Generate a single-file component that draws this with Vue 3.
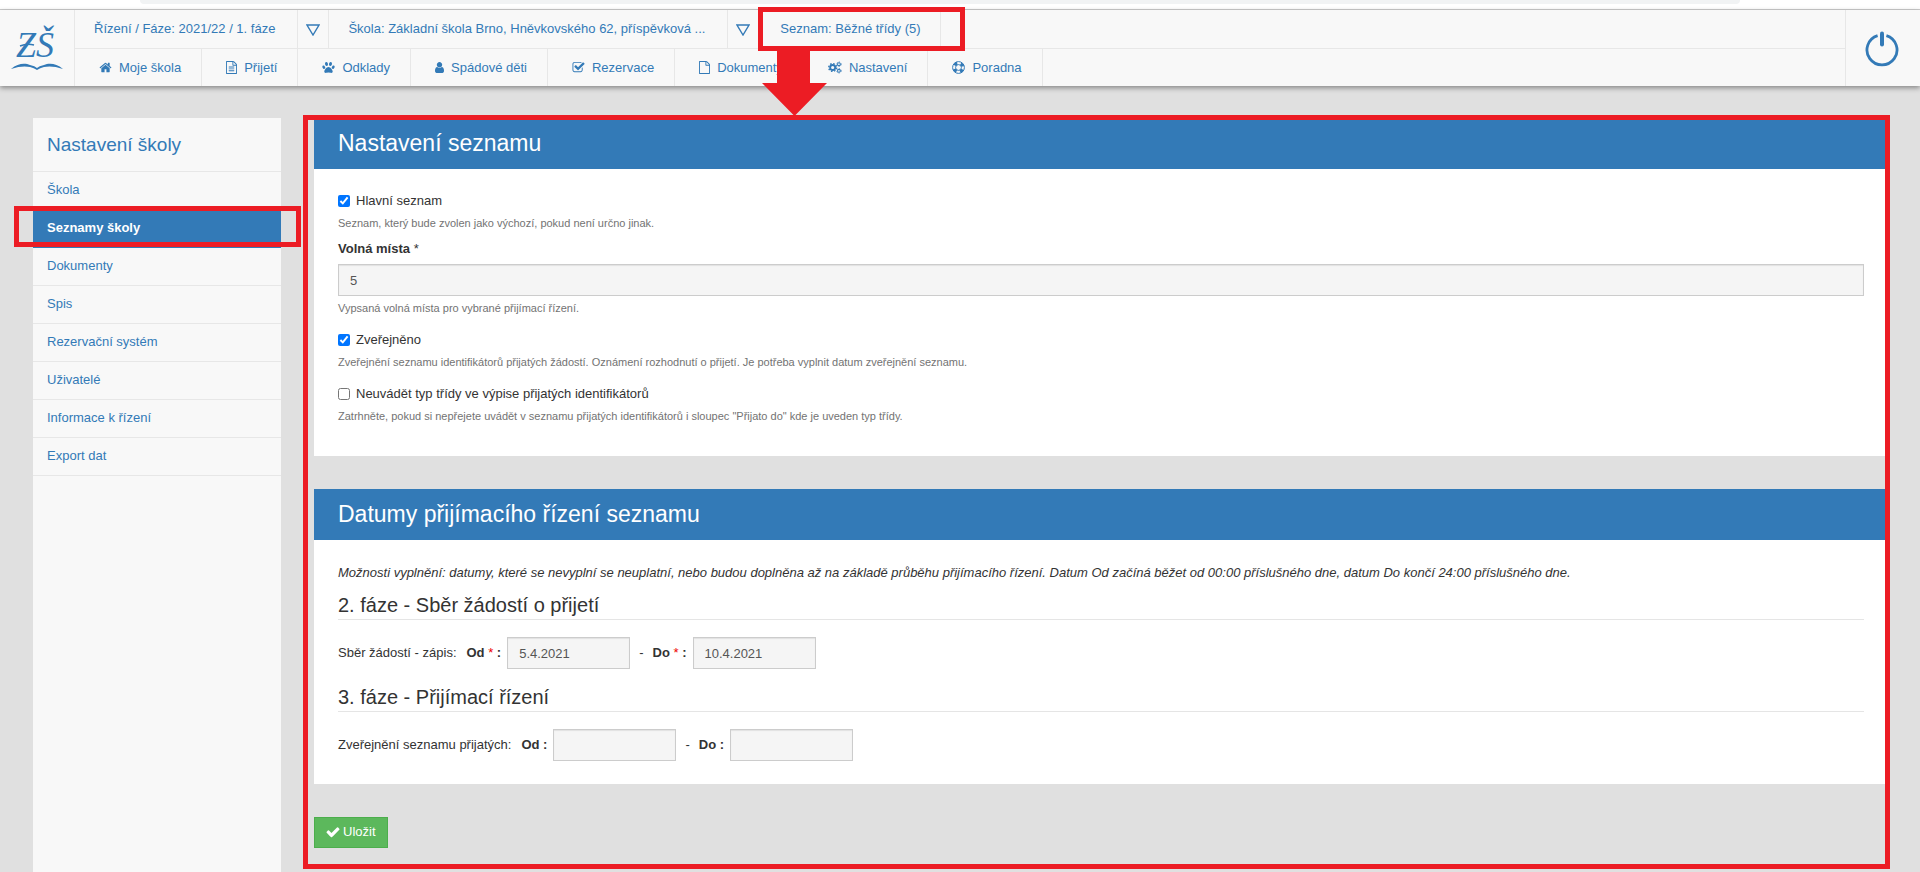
<script setup>
import { ref } from 'vue'

const icons = {
  home: { box: '0 0 1792 1792', w: 13, d: 'M1472 992v480q0 26-19 45t-45 19h-384v-384h-256v384h-384q-26 0-45-19t-19-45v-480q0-1 .5-3t.5-3l575-474 575 474q1 2 1 6zm223-69l-62 74q-8 9-21 11h-3q-13 0-21-7l-692-577-692 577q-12 8-24 7-13-2-21-11l-62-74q-8-10-7-23.5t11-21.5l719-599q32-26 76-26t76 26l244 204v-195q0-14 9-23t23-9h192q14 0 23 9t9 23v408l219 182q10 8 11 21.5t-7 23.5z' },
  text: { box: '128 0 1536 1792', w: 11, d: 'M1596 380q28 28 48 76t20 88v1152q0 40-28 68t-68 28h-1344q-40 0-68-28t-28-68v-1600q0-40 28-68t68-28h896q40 0 88 20t76 48zm-444-244v376h376q-10-29-22-41l-313-313q-12-12-41-22zm384 1528v-1024h-416q-40 0-68-28t-28-68v-416h-768v1536h1280zm-1024-864q0-14 9-23t23-9h704q14 0 23 9t9 23v64q0 14-9 23t-23 9h-704q-14 0-23-9t-9-23v-64zm736 224q14 0 23 9t9 23v64q0 14-9 23t-23 9h-704q-14 0-23-9t-9-23v-64q0-14 9-23t23-9h704zm0 256q14 0 23 9t9 23v64q0 14-9 23t-23 9h-704q-14 0-23-9t-9-23v-64q0-14 9-23t23-9h704z' },
  user: { box: '256 0 1280 1792', w: 9, d: 'M1536 1399q0 109-62.5 187t-150.5 78h-854q-88 0-150.5-78t-62.5-187q0-85 8.5-160.5t31.5-152 58.5-131 94-89 134.5-34.5q131 128 313 128t313-128q76 0 134.5 34.5t94 89 58.5 131 31.5 152 8.5 160.5zm-256-887q0 159-112.5 271.5t-271.5 112.5-271.5-112.5-112.5-271.5 112.5-271.5 271.5-112.5 271.5 112.5 112.5 271.5z' },
  check: { box: '0 0 1792 1792', w: 13, d: 'M1472 930v318q0 119-84.5 203.5t-203.5 84.5h-832q-119 0-203.5-84.5t-84.5-203.5v-832q0-119 84.5-203.5t203.5-84.5h832q63 0 117 25 15 7 18 23 3 17-9 29l-49 49q-10 10-23 10-3 0-9-2-23-6-45-6h-832q-66 0-113 47t-47 113v832q0 66 47 113t113 47h832q66 0 113-47t47-113v-254q0-13 9-22l64-64q10-10 23-10 6 0 12 3 20 8 20 29zm231-489l-814 814q-24 24-57 24t-57-24l-430-430q-24-24-24-57t24-57l110-110q24-24 57-24t57 24l263 263 647-647q24-24 57-24t57 24l110 110q24 24 24 57t-24 57z' },
  file: { box: '128 0 1536 1792', w: 11, d: 'M1596 380q28 28 48 76t20 88v1152q0 40-28 68t-68 28h-1344q-40 0-68-28t-28-68v-1600q0-40 28-68t68-28h896q40 0 88 20t76 48zm-444-244v376h376q-10-29-22-41l-313-313q-12-12-41-22zm384 1528v-1024h-416q-40 0-68-28t-28-68v-416h-768v1536h1280z' },
}

const menu = [
  { label: 'Moje škola', icon: 'home' },
  { label: 'Přijetí', icon: 'text' },
  { label: 'Odklady', icon: 'paw' },
  { label: 'Spádové děti', icon: 'user' },
  { label: 'Rezervace', icon: 'check' },
  { label: 'Dokumenty', icon: 'file' },
  { label: 'Nastavení', icon: 'cogs' },
  { label: 'Poradna', icon: 'ring' },
]

const side = ['Škola', 'Seznamy školy', 'Dokumenty', 'Spis', 'Rezervační systém', 'Uživatelé', 'Informace k řízení', 'Export dat']

const hlavni = ref(true)
const zverejneno = ref(true)
const neuvadet = ref(false)
const mista = ref('5')
const sberOd = ref('5.4.2021')
const sberDo = ref('10.4.2021')
const zverOd = ref('')
const zverDo = ref('')
</script>

<template>
  <div class="page">
    <div class="strip"><div class="pill"></div></div>

    <header class="header">
      <a class="logo" href="#" aria-label="ZŠ">
        <svg width="54" height="46" viewBox="0 0 54 46">
          <text x="6" y="32" class="logo-text">ZŠ</text>
          <path d="M10 21q7-3 14-1" class="ink" stroke-width="1.500" />
          <path d="M1 44C8 38 15 38 20 40q5 1 7 3q2-2 7-3C39 38 46 38 53 44C45 41 38 41 34 42q-4 1-7 3q-3-2-7-3C16 41 9 41 1 44Z" class="fill" />
        </svg>
      </a>
      <div class="bars">
        <div class="bar bar-top">
          <a class="cell" href="#">Řízení / Fáze: 2021/22 / 1. fáze</a>
          <button class="cell drop" type="button" aria-label="Vybrat fázi">
            <svg width="14" height="12" viewBox="0 0 14 12"><path d="M1 1h12L7 11z" class="ink" stroke-width="1.400" /></svg>
          </button>
          <a class="cell" href="#">Škola: Základní škola Brno, Hněvkovského 62, příspěvková ...</a>
          <button class="cell drop" type="button" aria-label="Vybrat školu">
            <svg width="14" height="12" viewBox="0 0 14 12"><path d="M1 1h12L7 11z" class="ink" stroke-width="1.400" /></svg>
          </button>
          <div class="marked">
            <a class="cell" href="#">Seznam: Běžné třídy (5)</a>
            <div class="frame frame-list"></div>
            <svg class="arrow" width="65" height="65" viewBox="0 0 65 65"><path d="M15 0h33v32h17L32.500 65 0 32h15z" /></svg>
          </div>
        </div>
        <nav class="bar">
          <a v-for="m in menu" :key="m.label" class="cell item" href="#">
            <svg v-if="icons[m.icon]" :width="icons[m.icon].w" height="13" :viewBox="icons[m.icon].box"><path :d="icons[m.icon].d" class="fill" /></svg>
            <svg v-else-if="m.icon === 'paw'" width="13" height="13" viewBox="0 0 13 13" class="fill">
              <ellipse cx="4.500" cy="3" rx="1.500" ry="2.100" transform="rotate(-12 4.500 3)" />
              <ellipse cx="8.500" cy="3" rx="1.500" ry="2.100" transform="rotate(12 8.500 3)" />
              <ellipse cx="1.800" cy="6.200" rx="1.300" ry="1.800" transform="rotate(-25 1.800 6.200)" />
              <ellipse cx="11.200" cy="6.200" rx="1.300" ry="1.800" transform="rotate(25 11.200 6.200)" />
              <path d="M6.500 6C8.500 6 10.700 8.900 10.700 10.600C10.700 12 9.500 12 8.600 11.800Q6.500 11 4.400 11.800C3.500 12 2.300 12 2.300 10.600C2.300 8.900 4.500 6 6.500 6Z" />
            </svg>
            <svg v-else-if="m.icon === 'cogs'" width="14" height="13" viewBox="0 0 15 13">
              <circle cx="5" cy="6.500" r="2.700" class="ink" stroke-width="2" />
              <circle cx="5" cy="6.500" r="4.200" class="ink" stroke-width="1.500" stroke-dasharray="1.650 1.650" />
              <circle cx="11.700" cy="3" r="1.500" class="ink" stroke-width="1.100" />
              <circle cx="11.700" cy="3" r="2.400" class="ink" stroke-width=".9" stroke-dasharray="1.250 1.260" />
              <circle cx="11.700" cy="10" r="1.500" class="ink" stroke-width="1.100" />
              <circle cx="11.700" cy="10" r="2.400" class="ink" stroke-width=".9" stroke-dasharray="1.250 1.260" />
            </svg>
            <svg v-else width="13" height="13" viewBox="0 0 13 13">
              <circle cx="6.500" cy="6.500" r="5.900" class="ink" stroke-width="1" />
              <circle cx="6.500" cy="6.500" r="2.900" class="ink" stroke-width="1" />
              <circle cx="6.500" cy="6.500" r="4.400" class="ink" stroke-width="3" stroke-dasharray="3.200 3.710" stroke-dashoffset="-1.850" />
            </svg>
            <span>{{ m.label }}</span>
          </a>
        </nav>
      </div>
      <button class="power" type="button" aria-label="Odhlásit">
        <svg width="34" height="37" viewBox="0 0 34 37">
          <path d="M12.600 5.600A15 15 0 1 0 21.400 5.600" class="ink" stroke-width="2.800" />
          <path d="M17 3.500v11" class="ink" stroke-width="4" stroke-linecap="round" />
        </svg>
      </button>
    </header>

    <div class="content">
      <aside class="side">
        <h2>Nastavení školy</h2>
        <nav>
          <a v-for="s in side" :key="s" href="#" :class="{ active: s === 'Seznamy školy' }">
            {{ s }}<span v-if="s === 'Seznamy školy'" class="frame frame-side"></span>
          </a>
        </nav>
      </aside>

      <main class="main">
        <section class="panel">
          <h1>Nastavení seznamu</h1>
          <div class="body body-list">
            <label class="tick"><input v-model="hlavni" type="checkbox" />Hlavní seznam</label>
            <p class="help">Seznam, který bude zvolen jako výchozí, pokud není určno jinak.</p>
            <label class="name" for="mista"><b>Volná místa</b> *</label>
            <input id="mista" v-model="mista" class="field" type="text" />
            <p class="help">Vypsaná volná místa pro vybrané přijímací řízení.</p>
            <label class="tick next"><input v-model="zverejneno" type="checkbox" />Zveřejněno</label>
            <p class="help">Zveřejnění seznamu identifikátorů přijatých žádostí. Oznámení rozhodnutí o přijetí. Je potřeba vyplnit datum zveřejnění seznamu.</p>
            <label class="tick next"><input v-model="neuvadet" type="checkbox" />Neuvádět typ třídy ve výpise přijatých identifikátorů</label>
            <p class="help">Zatrhněte, pokud si nepřejete uvádět v seznamu přijatých identifikátorů i sloupec "Přijato do" kde je uveden typ třídy.</p>
          </div>
        </section>

        <section class="panel">
          <h1>Datumy přijímacího řízení seznamu</h1>
          <div class="body body-dates">
            <p class="intro">Možnosti vyplnění: datumy, které se nevyplní se neuplatní, nebo budou doplněna až na základě průběhu přijímacího řízení. Datum Od začíná běžet od 00:00 příslušného dne, datum Do končí 24:00 příslušného dne.</p>
            <h3>2. fáze - Sběr žádostí o přijetí</h3>
            <div class="dates">
              <span class="what">Sběr žádostí - zápis:</span>
              <label for="sber-od">Od <i>*</i> :</label>
              <input id="sber-od" v-model="sberOd" class="field date" type="text" />
              <span class="dash">-</span>
              <label for="sber-do">Do <i>*</i> :</label>
              <input id="sber-do" v-model="sberDo" class="field date" type="text" />
            </div>
            <h3 class="later">3. fáze - Přijímací řízení</h3>
            <div class="dates">
              <span class="what">Zveřejnění seznamu přijatých:</span>
              <label for="zver-od">Od :</label>
              <input id="zver-od" v-model="zverOd" class="field date" type="text" />
              <span class="dash">-</span>
              <label for="zver-do">Do :</label>
              <input id="zver-do" v-model="zverDo" class="field date" type="text" />
            </div>
          </div>
        </section>

        <button class="save" type="button">
          <svg width="14" height="14" viewBox="64 64 1664 1664"><path d="M1671 566q0 40-28 68l-724 724-136 136q-28 28-68 28t-68-28l-136-136-362-362q-28-28-28-68t28-68l136-136q28-28 68-28t68 28l294 295 656-657q28-28 68-28t68 28l136 136q28 28 28 68z" fill="#fff" /></svg>
          Uložit
        </button>
        <div class="frame frame-main"></div>
      </main>
    </div>
  </div>
</template>

<style>
body {
  margin: 0;
  background: #e0e0e0;
}
</style>

<style scoped>
.page {
  box-sizing: border-box;
  display: flex;
  flex-direction: column;
  min-height: 100vh;
  overflow: hidden;
  font: 13px/20px "Liberation Sans", Arial, sans-serif;
  color: #333;
}
.page * { box-sizing: border-box; }
a { color: #337ab7; text-decoration: none; }
button { font: inherit; cursor: pointer; }
h1, h2, h3, p { margin: 0; font-weight: 400; }
.ink { fill: none; stroke: #337ab7; }
.fill { fill: #337ab7; }

.strip { height: 10px; background: #fff; border-bottom: 1px solid #ccc; }
.pill { height: 4px; margin: 0 180px 0 140px; background: #f1f3f4; border-radius: 0 0 16px 16px; }

.header {
  position: relative;
  z-index: 2;
  display: flex;
  background: #f8f8f8;
  box-shadow: 0 2px 5px rgba(0, 0, 0, .4);
}
.logo { display: flex; width: 75px; padding: 15px 0 0 10px; border-right: 1px solid #e7e7e7; }
.logo-text { font: italic 36px "Liberation Serif", serif; fill: #337ab7; }
.bars { flex: 1; min-width: 0; }
.bar { display: flex; height: 37px; }
.bar-top { height: 39px; border-bottom: 1px solid #e7e7e7; }
.cell {
  display: flex;
  align-items: center;
  padding: 0 22px 0 19px;
  border: 0;
  border-right: 1px solid #e7e7e7;
  background: none;
  white-space: nowrap;
}
.bar-top .cell { padding-bottom: 1px; }
.drop { justify-content: center; width: 31px; }
.bar-top .drop { padding: 2px 0 0; }
.marked { position: relative; display: flex; }
.marked .cell { padding-left: 21px; padding-right: 19px; }
.item { gap: 7px; padding: 0 20px 0 24px; }
.power {
  display: flex;
  align-items: center;
  justify-content: center;
  width: 75px;
  padding: 0 2px 0 0;
  border: 0;
  border-left: 1px solid #e7e7e7;
  background: none;
}

.frame { position: absolute; border: 5px solid #ec1c24; pointer-events: none; }
.frame-list { inset: -3px -24px -3px -1px; }
.frame-side { inset: -4px -20px 0 -19px; }
.frame-main { inset: -3px -2px -21px -11px; }
.arrow { position: absolute; top: 41px; left: 3px; fill: #ec1c24; }

.content { flex: 1; display: flex; gap: 33px; padding: 32px 32px 0 33px; }
.side { flex: none; width: 248px; background: #f8f8f8; }
.side h2 {
  height: 54px;
  padding-left: 14px;
  border-bottom: 1px solid #e7e7e7;
  font-size: 19px;
  line-height: 53px;
  color: #337ab7;
}
.side a {
  position: relative;
  display: block;
  height: 38px;
  padding-left: 14px;
  border-bottom: 1px solid #e7e7e7;
  line-height: 36px;
}
.side .active { background: #337ab7; color: #fff; font-weight: 700; border-color: #337ab7; }

.main { position: relative; flex: 1; min-width: 0; align-self: flex-start; }
.panel { margin-bottom: 33px; background: #fff; }
.panel h1 { padding: 0 24px; background: #337ab7; color: #fff; font-size: 23px; line-height: 51px; }
.body { padding: 22px 24px 0; }
.body-list { padding-bottom: 32px; }
.body-dates { padding-top: 23px; padding-bottom: 23px; }
.tick { display: flex; align-items: center; gap: 6px; }
.tick input { width: 12px; height: 12px; margin: 0; }
.next { margin-top: 14px; }
.help { margin-top: 4px; font-size: 11px; line-height: 16px; color: #737373; }
.name { display: block; margin: 8px 0 5px; }
.field {
  display: block;
  width: 100%;
  height: 32px;
  padding: 0 11px;
  border: 1px solid #ccc;
  border-radius: 0;
  background: #f5f5f5;
  box-shadow: inset 0 1px 1px rgba(0, 0, 0, .08);
  font: inherit;
  color: #555;
}
.intro { font-style: italic; }
h3 { margin: 10px 0 17px; padding-bottom: 2px; border-bottom: 1px solid #e5e5e5; font-size: 20px; line-height: 24px; }
.later { margin-top: 16px; }
.dates { display: flex; align-items: center; gap: 6px; }
.dates label { font-weight: 700; }
.dates i { font-weight: 400; font-style: normal; color: #e00; }
.what { margin-right: 4px; }
.dash { margin: 0 3px; }
.date { width: 123px; }
.save {
  display: flex;
  align-items: center;
  gap: 3px;
  height: 31px;
  padding: 0 11px 2px;
  border: 1px solid #4cae4c;
  background: #5cb85c;
  color: #fff;
}
</style>
